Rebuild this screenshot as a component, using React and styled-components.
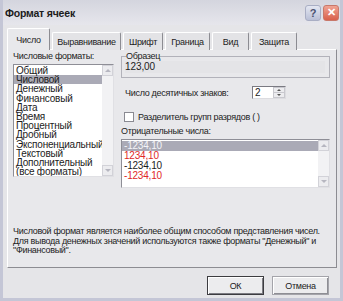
import React from 'react';
import styled, { createGlobalStyle } from 'styled-components';

const GlobalStyle = createGlobalStyle`
  body {
    margin: 0;
    background: #ffffff;
    font-family: "Liberation Sans", Arial, sans-serif;
  }
`;

const Window = styled.div`
  width: 343px;
  height: 301px;
  box-sizing: border-box;
  background: #e5e5e8;
  border: 3px solid #c4c6d6;
  border-top: 0;
  display: flex;
  flex-direction: column;
  color: #1c1c1c;
  font-size: 9px;
  letter-spacing: -0.3px;
`;

const TitleBar = styled.div`
  height: 25px;
  flex: 0 0 25px;
  display: flex;
  align-items: center;
  padding: 0 1px 0 2px;
  background: linear-gradient(#d4d5de, #e6e6ec);
`;

const Title = styled.div`
  flex: 1;
  font-weight: bold;
  font-size: 10.5px;
  letter-spacing: -0.2px;
`;

const CaptionButton = styled.div`
  width: 16px;
  height: 16px;
  margin-left: 2px;
  border-radius: 3px;
  box-sizing: border-box;
  display: flex;
  align-items: center;
  justify-content: center;
  font-weight: bold;
  font-size: 11px;
  letter-spacing: 0;
  border: 1px solid ${(p) => (p.$close ? '#c8786a' : '#a9aec4')};
  background: ${(p) =>
    p.$close ? 'linear-gradient(#f0a494, #d9604a)' : 'linear-gradient(#e4e7f2, #b9bfd6)'};
  color: ${(p) => (p.$close ? '#fff' : '#4a5270')};
`;

const TabRow = styled.div`
  display: flex;
  align-items: flex-end;
  gap: 2px;
  height: 22px;
  margin: 3px 0 -1px 4px;
  position: relative;
  z-index: 1;
`;

const Tab = styled.div`
  width: ${(p) => p.$w}px;
  height: ${(p) => (p.$active ? 22 : 18)}px;
  box-sizing: border-box;
  display: flex;
  align-items: center;
  justify-content: center;
  padding-top: ${(p) => (p.$active ? 0 : 1)}px;
  background: ${(p) => (p.$active ? '#e8e8eb' : '#e3e3e6')};
  border-top: 1px solid #ffffff;
  border-left: 1px solid #ffffff;
  border-right: 1px solid #8c8c92;
  border-radius: 2px 2px 0 0;
`;

const Panel = styled.div`
  height: 219px;
  margin: 0 3px 0 4px;
  box-sizing: border-box;
  background: #e8e8eb;
  border: 1px solid #8c8c92;
  border-top-color: #ffffff;
  border-left-color: #ffffff;
  padding: 1px 6px 0 5px;
  display: flex;
  flex-direction: column;
`;

const Columns = styled.div`
  display: grid;
  grid-template-columns: 101px 1fr;
  column-gap: 7px;
`;

const Column = styled.div`
  display: flex;
  flex-direction: column;
`;

const Label = styled.div`
  line-height: 10px;
  height: 10px;
  margin-top: ${(p) => p.$mt || 0}px;
  white-space: nowrap;
`;

const ListBox = styled.div`
  height: ${(p) => p.$h}px;
  margin-top: 3px;
  box-sizing: border-box;
  background: #ffffff;
  border: 1px solid #8e8e96;
  border-right-color: #e0e0e4;
  border-bottom-color: #e0e0e4;
  display: flex;
`;

const Items = styled.div`
  flex: 1;
  padding-top: 1px;
  overflow: hidden;
`;

const Item = styled.div`
  height: ${(p) => p.$rh}px;
  line-height: ${(p) => p.$rh}px;
  padding-left: 2px;
  font-size: 10px;
  letter-spacing: -0.2px;
  white-space: nowrap;
  background: ${(p) => (p.$selected ? '#aaaab6' : 'transparent')};
  color: ${(p) => (p.$selected ? p.$selColor : p.$red ? '#e02828' : '#1c1c1c')};
`;

const ScrollBar = styled.div`
  width: 11px;
  background: #f2f2f4;
  display: flex;
  flex-direction: column;
  justify-content: space-between;
`;

const ScrollButton = styled.div`
  height: 11px;
  box-sizing: border-box;
  border: 1px solid #d2d2d8;
  background: #ececef;
  display: flex;
  align-items: center;
  justify-content: center;
`;

const Arrow = styled.div`
  width: 0;
  height: 0;
  border-left: 3px solid transparent;
  border-right: 3px solid transparent;
  ${(p) => (p.$down ? 'border-top' : 'border-bottom')}: 3px solid #b6b6c0;
`;

const GroupBox = styled.fieldset`
  margin: 0;
  padding: 0 4px 3px 3px;
  height: 27px;
  box-sizing: border-box;
  border: 1px solid #b2b2ba;
  border-radius: 0;
`;

const Legend = styled.legend`
  padding: 0;
  line-height: 10px;
  margin-left: 1px;
`;

const Sample = styled.div`
  line-height: 12px;
  font-size: 10px;
  letter-spacing: -0.1px;
  background: #e4e4e7;
`;

const DecimalsRow = styled.div`
  display: flex;
  align-items: center;
  margin-top: 8px;
  margin-left: 4px;
`;

const DecimalsLabel = styled.div`
  width: 127px;
  white-space: nowrap;
`;

const SpinBox = styled.div`
  width: 34px;
  height: 13px;
  box-sizing: border-box;
  background: #fff;
  border: 1px solid #7a7a82;
  border-right-color: #dcdce0;
  border-bottom-color: #dcdce0;
  display: flex;
`;

const SpinValue = styled.div`
  flex: 1;
  padding-left: 2px;
  line-height: 11px;
  font-size: 10px;
`;

const SpinArrows = styled.div`
  width: 12px;
  display: flex;
  flex-direction: column;
`;

const SpinArrow = styled.div`
  flex: 1;
  background: #ececef;
  border: 1px solid #c8c8ce;
  border-top-width: ${(p) => (p.$down ? 0 : 1)}px;
  display: flex;
  align-items: center;
  justify-content: center;
`;

const SmallArrow = styled.div`
  width: 0;
  height: 0;
  border-left: 2px solid transparent;
  border-right: 2px solid transparent;
  ${(p) => (p.$down ? 'border-top' : 'border-bottom')}: 2px solid #555;
`;

const CheckRow = styled.div`
  display: flex;
  align-items: center;
  margin-top: 13px;
  margin-left: 3px;
`;

const CheckBox = styled.div`
  width: 10px;
  height: 10px;
  box-sizing: border-box;
  background: #fff;
  border: 1px solid #8a8a92;
  margin-right: 4px;
`;

const Description = styled.div`
  margin-top: 39px;
  line-height: 9.7px;
  white-space: nowrap;
`;

const Footer = styled.div`
  display: flex;
  justify-content: flex-end;
  gap: 8px;
  padding: 8px 11px 0 0;
`;

const Button = styled.div`
  width: 57px;
  height: 19px;
  box-sizing: border-box;
  display: flex;
  align-items: center;
  justify-content: center;
  background: #ececee;
  border: 1px solid ${(p) => (p.$default ? '#3c3c40' : '#a4a4aa')};
  box-shadow: ${(p) =>
    p.$default
      ? 'inset 1px 1px 0 #ffffff, inset -1px -1px 0 #7c7c82'
      : 'inset 1px 1px 0 #ffffff, inset -1px -1px 0 #8e8e94'};
`;

const formats = [
  'Общий',
  'Числовой',
  'Денежный',
  'Финансовый',
  'Дата',
  'Время',
  'Процентный',
  'Дробный',
  'Экспоненциальный',
  'Текстовый',
  'Дополнительный',
  '(все форматы)',
];

const negatives = [
  { text: '-1234,10', red: false },
  { text: '1234,10', red: true },
  { text: '-1234,10', red: false },
  { text: '-1234,10', red: true },
];

const tabs = [
  { label: 'Число', w: 43 },
  { label: 'Выравнивание', w: 69 },
  { label: 'Шрифт', w: 40 },
  { label: 'Граница', w: 45 },
  { label: 'Вид', w: 37 },
  { label: 'Защита', w: 46 },
];

const Scroll = () => (
  <ScrollBar>
    <ScrollButton>
      <Arrow />
    </ScrollButton>
    <ScrollButton>
      <Arrow $down />
    </ScrollButton>
  </ScrollBar>
);

const App = () => (
  <>
    <GlobalStyle />
    <Window>
      <TitleBar>
        <Title>Формат ячеек</Title>
        <CaptionButton>?</CaptionButton>
        <CaptionButton $close>✕</CaptionButton>
      </TitleBar>

      <TabRow>
        {tabs.map((t, i) => (
          <Tab key={t.label} $w={t.w} $active={i === 0}>
            {t.label}
          </Tab>
        ))}
      </TabRow>

      <Panel>
        <Columns>
          <Column>
            <Label>Числовые форматы:</Label>
            <ListBox $h={113}>
              <Items>
                {formats.map((f) => (
                  <Item key={f} $rh={9.2} $selected={f === 'Числовой'} $selColor="#1c1c1c">
                    {f}
                  </Item>
                ))}
              </Items>
              <Scroll />
            </ListBox>
          </Column>

          <Column>
            <GroupBox>
              <Legend>Образец</Legend>
              <Sample>123,00</Sample>
            </GroupBox>

            <DecimalsRow>
              <DecimalsLabel>Число десятичных знаков:</DecimalsLabel>
              <SpinBox>
                <SpinValue>2</SpinValue>
                <SpinArrows>
                  <SpinArrow>
                    <SmallArrow />
                  </SpinArrow>
                  <SpinArrow $down>
                    <SmallArrow $down />
                  </SpinArrow>
                </SpinArrows>
              </SpinBox>
            </DecimalsRow>

            <CheckRow>
              <CheckBox />
              Разделитель групп разрядов ( )
            </CheckRow>

            <Label $mt={4}>Отрицательные числа:</Label>
            <ListBox $h={49}>
              <Items>
                {negatives.map((n, i) => (
                  <Item key={i} $rh={10} $red={n.red} $selected={i === 0} $selColor="#f4f4f8">
                    {n.text}
                  </Item>
                ))}
              </Items>
              <Scroll />
            </ListBox>
          </Column>
        </Columns>

        <Description>
          Числовой формат является наиболее общим способом представления чисел.
          <br />
          Для вывода денежных значений используются также форматы "Денежный" и
          <br />
          "Финансовый".
        </Description>
      </Panel>

      <Footer>
        <Button $default>ОК</Button>
        <Button>Отмена</Button>
      </Footer>
    </Window>
  </>
);

export default App;
